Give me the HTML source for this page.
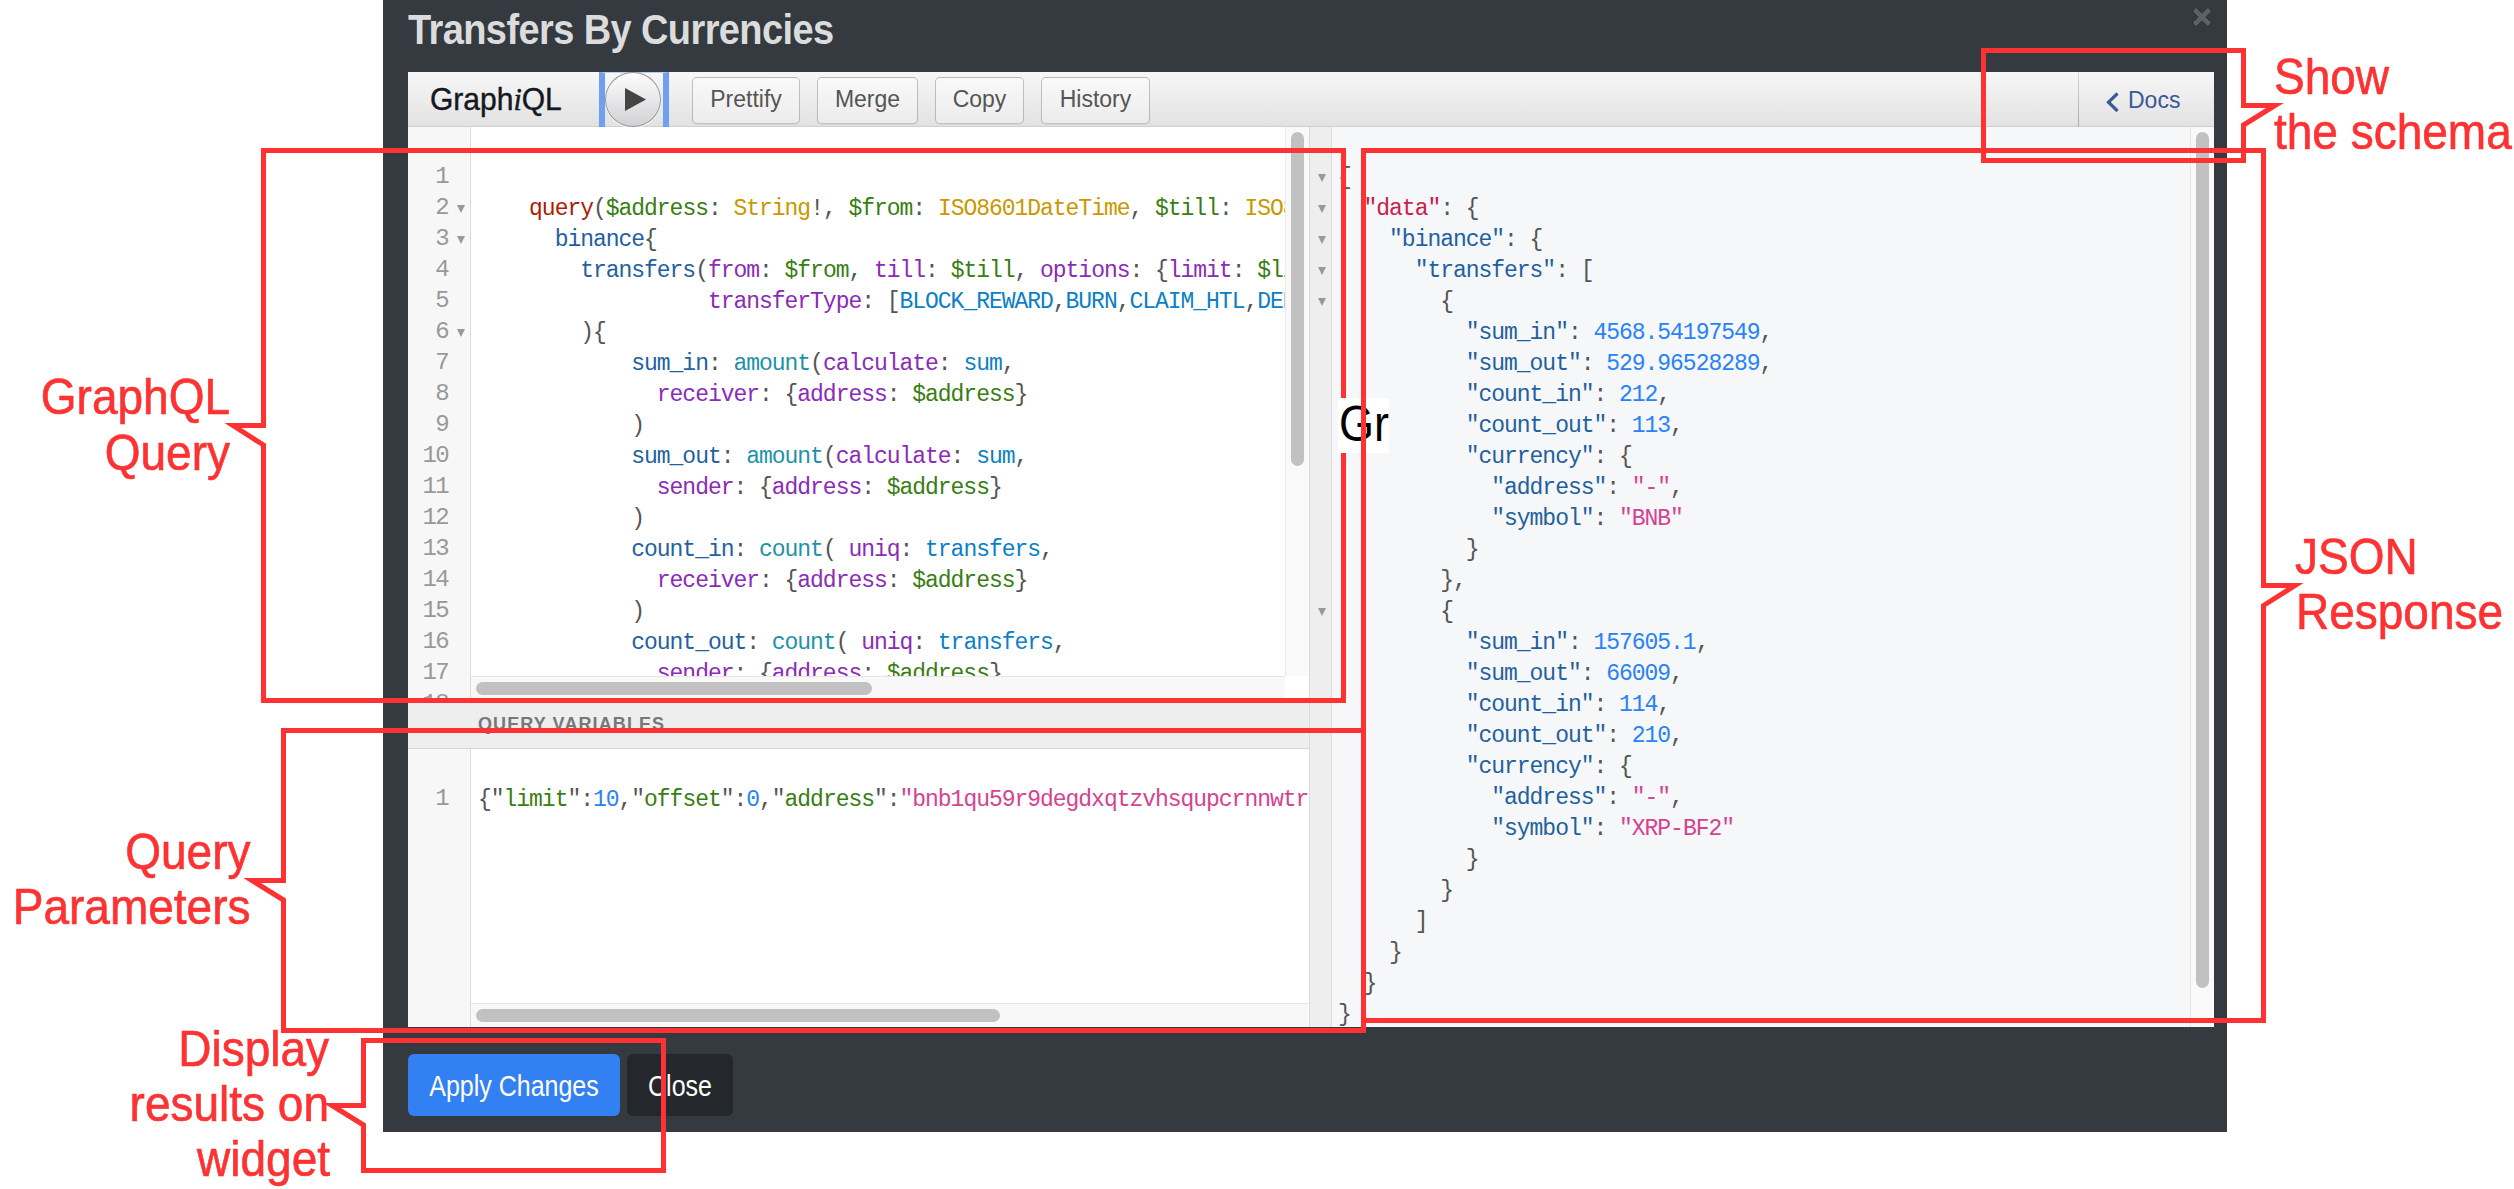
<!DOCTYPE html>
<html>
<head>
<meta charset="utf-8">
<style>
*{box-sizing:border-box;margin:0;padding:0}
html,body{width:2514px;height:1189px;overflow:hidden;background:#fff;font-family:"Liberation Sans",sans-serif}
.abs{position:absolute}
#modal{position:absolute;left:383px;top:0;width:1844px;height:1132px;background:#343a40}
#title{position:absolute;left:408px;top:6px;transform:scaleY(1.115);transform-origin:0 0;font-size:38px;font-weight:bold;color:#dcdcdc;letter-spacing:-0.6px;white-space:nowrap}
#closex{position:absolute;left:2190px;top:5px;width:24px;height:24px}
#gq{position:absolute;left:408px;top:72px;width:1806px;height:955px;background:#fff;overflow:hidden}
#toolbar{position:absolute;left:408px;top:72px;width:1806px;height:55px;background:linear-gradient(#f7f7f7,#e2e2e2);border-bottom:1px solid #d0d0d0}
.btn{position:absolute;top:77px;height:47px;border:1px solid rgba(0,0,0,.22);border-radius:5px;background:linear-gradient(#f9f9f9,#ececec);box-shadow:0 1px 1px rgba(0,0,0,.06);color:#555;font-size:23px;text-align:center;line-height:42px;white-space:nowrap}
#logo{position:absolute;left:430px;top:82px;transform:scaleY(1.03);transform-origin:0 28px;-webkit-text-stroke:0.4px #141823;font-size:30px;color:#141823;white-space:nowrap;line-height:36px}
#logo i{font-family:"Liberation Serif",serif;font-style:italic}
.mono{font-family:"Liberation Mono",monospace}
.gutter{position:absolute;background:#f7f7f7;border-right:1px solid #ddd}
.ln{position:absolute;width:62px;text-align:right;color:#999;font-family:"Liberation Mono",monospace;font-size:24px;letter-spacing:-1.63px;white-space:pre;line-height:31px}
.code{position:absolute;white-space:pre;font-family:"Liberation Mono",monospace;font-size:23px;letter-spacing:-1.03px;line-height:31px;color:#555}
.fold{position:absolute;width:0;height:0;border-left:4.4px solid transparent;border-right:4.4px solid transparent;border-top:8.8px solid #999}
.kw{color:#B11A04}.vr{color:#397D13}.at{color:#CA9800}.pr{color:#1F61A0}.atr{color:#8B2BB9}.q{color:#1C92A9}.en{color:#0B7FC7}.nm{color:#2882F9}.st{color:#D64292}.df{color:#C8204F}
.thumb{position:absolute;background:#c1c1c1;border-radius:7px}
#apply{position:absolute;left:408px;top:1054px;width:212px;height:62px;border-radius:6px;background:#3380f3;color:#fff;font-size:25px;line-height:62px;text-align:center;white-space:nowrap}
#closeb{position:absolute;left:627px;top:1054px;width:106px;height:62px;border-radius:6px;background:#24272b;color:#fff;font-size:25px;line-height:62px;text-align:center;white-space:nowrap}
</style>
</head>
<body>
<div id="modal"></div>
<div id="title">Transfers By Currencies</div>
<svg id="closex" viewBox="0 0 24 24"><g stroke="#2b2f34" stroke-width="6" stroke-linecap="butt"><path d="M4 4 L20 20 M20 4 L4 20"/></g><g stroke="#5d6167" stroke-width="4.6"><path d="M4.5 4.5 L19.5 19.5 M19.5 4.5 L4.5 19.5"/></g></svg>

<div id="gq"></div>
<div id="toolbar"></div>
<div id="logo">Graph<i>i</i>QL</div>


<!-- execute button -->
<div class="abs" style="left:599px;top:72px;width:70px;height:55px;border-left:6px solid #6f9ff2;border-right:6px solid #6f9ff2;border-top:1px solid #b9cff5"></div>
<div class="abs" style="left:605px;top:72px;width:56px;height:55px;border-radius:50%;border:1px solid #9a9a9a;background:linear-gradient(#fdfdfd,#d1d2d5);box-shadow:0 1px 0 #fff"></div>
<svg class="abs" style="left:620px;top:84px" width="30" height="30" viewBox="620 84 30 30"><path d="M625,88 L646,99.5 L625,111 Z" fill="#444"/></svg>
<div class="btn" style="left:692px;width:108px">Prettify</div>
<div class="btn" style="left:817px;width:101px">Merge</div>
<div class="btn" style="left:935px;width:89px">Copy</div>
<div class="btn" style="left:1041px;width:109px">History</div>
<!-- docs -->
<div class="abs" style="left:2078px;top:72px;width:1px;height:55px;background:linear-gradient(#d8d8d8,#a8a8a8)"></div>
<svg class="abs" style="left:2100px;top:88px" width="24" height="28" viewBox="2100 88 24 28"><path d="M2117.5,93.5 L2108.5,102.2 L2117.5,111" fill="none" stroke="#3B5998" stroke-width="3.2"/></svg>
<div class="abs" style="left:2128px;top:86px;font-size:23px;color:#3B5998;line-height:28px">Docs</div>

<!-- PANES -->
<div class="abs" style="left:408px;top:127px;width:901px;height:573px;background:#fff"></div>
<div class="gutter" style="left:408px;top:127px;width:63px;height:573px"></div>
<div class="abs" style="left:471px;top:127px;width:814px;height:549px;overflow:hidden">
<div class="code" style="left:7px;top:35.9px"></div>
<div class="code" style="left:7px;top:66.9px">    <span class="kw">query</span>(<span class="vr">$address</span>: <span class="at">String</span>!, <span class="vr">$from</span>: <span class="at">ISO8601DateTime</span>, <span class="vr">$till</span>: <span class="at">ISO8601DateTime</span>, <span class="vr">$limit</span>: <span class="at">Int</span>!)</div>
<div class="code" style="left:7px;top:97.9px">      <span class="pr">binance</span>{</div>
<div class="code" style="left:7px;top:128.9px">        <span class="pr">transfers</span>(<span class="atr">from</span>: <span class="vr">$from</span>, <span class="atr">till</span>: <span class="vr">$till</span>, <span class="atr">options</span>: {<span class="atr">limit</span>: <span class="vr">$limit</span>},</div>
<div class="code" style="left:7px;top:159.9px">                  <span class="atr">transferType</span>: [<span class="en">BLOCK_REWARD</span>,<span class="en">BURN</span>,<span class="en">CLAIM_HTL</span>,<span class="en">DEPOSIT</span>]</div>
<div class="code" style="left:7px;top:190.9px">        ){</div>
<div class="code" style="left:7px;top:221.9px">            <span class="pr">sum_in</span>: <span class="q">amount</span>(<span class="atr">calculate</span>: <span class="en">sum</span>,</div>
<div class="code" style="left:7px;top:252.9px">              <span class="atr">receiver</span>: {<span class="atr">address</span>: <span class="vr">$address</span>}</div>
<div class="code" style="left:7px;top:283.9px">            )</div>
<div class="code" style="left:7px;top:314.9px">            <span class="pr">sum_out</span>: <span class="q">amount</span>(<span class="atr">calculate</span>: <span class="en">sum</span>,</div>
<div class="code" style="left:7px;top:345.9px">              <span class="atr">sender</span>: {<span class="atr">address</span>: <span class="vr">$address</span>}</div>
<div class="code" style="left:7px;top:376.9px">            )</div>
<div class="code" style="left:7px;top:407.9px">            <span class="pr">count_in</span>: <span class="q">count</span>( <span class="atr">uniq</span>: <span class="en">transfers</span>,</div>
<div class="code" style="left:7px;top:438.9px">              <span class="atr">receiver</span>: {<span class="atr">address</span>: <span class="vr">$address</span>}</div>
<div class="code" style="left:7px;top:469.9px">            )</div>
<div class="code" style="left:7px;top:500.9px">            <span class="pr">count_out</span>: <span class="q">count</span>( <span class="atr">uniq</span>: <span class="en">transfers</span>,</div>
<div class="code" style="left:7px;top:531.9px">              <span class="atr">sender</span>: {<span class="atr">address</span>: <span class="vr">$address</span>}</div>
<div class="code" style="left:7px;top:562.9px">            )</div>
</div>
<div class="abs" style="left:408px;top:127px;width:62px;height:573px;overflow:hidden">
<div class="ln" style="left:-22px;top:34.4px">1</div>
<div class="ln" style="left:-22px;top:65.4px">2</div>
<div class="ln" style="left:-22px;top:96.4px">3</div>
<div class="ln" style="left:-22px;top:127.4px">4</div>
<div class="ln" style="left:-22px;top:158.4px">5</div>
<div class="ln" style="left:-22px;top:189.4px">6</div>
<div class="ln" style="left:-22px;top:220.4px">7</div>
<div class="ln" style="left:-22px;top:251.4px">8</div>
<div class="ln" style="left:-22px;top:282.4px">9</div>
<div class="ln" style="left:-22px;top:313.4px">10</div>
<div class="ln" style="left:-22px;top:344.4px">11</div>
<div class="ln" style="left:-22px;top:375.4px">12</div>
<div class="ln" style="left:-22px;top:406.4px">13</div>
<div class="ln" style="left:-22px;top:437.4px">14</div>
<div class="ln" style="left:-22px;top:468.4px">15</div>
<div class="ln" style="left:-22px;top:499.4px">16</div>
<div class="ln" style="left:-22px;top:530.4px">17</div>
<div class="ln" style="left:-22px;top:561.4px">18</div>
<div class="fold" style="left:49px;top:77.5px"></div>
<div class="fold" style="left:49px;top:108.5px"></div>
<div class="fold" style="left:49px;top:201.5px"></div>
</div>
<div class="abs" style="left:1285px;top:127px;width:24px;height:549px;background:#f9f9f9;border-left:1px solid #ececec"></div>
<div class="thumb" style="left:1291px;top:132px;width:13px;height:334px"></div>
<div class="abs" style="left:471px;top:676px;width:814px;height:24px;background:#f8f8f8;border-top:1px solid #e6e6e6"></div>
<div class="thumb" style="left:476px;top:682px;width:396px;height:13px"></div>
<div class="abs" style="left:1285px;top:676px;width:24px;height:24px;background:#fff"></div>
<div class="abs" style="left:408px;top:700px;width:901px;height:49px;background:#eeeeee;border-bottom:1px solid #d8d8d8;overflow:hidden"><div class="abs" style="left:70px;top:12px;font-size:18px;font-weight:bold;color:#777;letter-spacing:1.1px;line-height:24px;white-space:nowrap">QUERY VARIABLES</div></div>
<div class="abs" style="left:408px;top:749px;width:901px;height:278px;background:#fff"></div>
<div class="gutter" style="left:408px;top:749px;width:63px;height:278px"></div>
<div class="ln" style="left:386px;top:783.2px">1</div>
<div class="abs" style="left:471px;top:749px;width:838px;height:254px;overflow:hidden">
<div class="code" style="left:7px;top:35.7px">{"<span class="vr">limit</span>":<span class="nm">10</span>,"<span class="vr">offset</span>":<span class="nm">0</span>,"<span class="vr">address</span>":<span class="st">"bnb1qu59r9degdxqtzvhsqupcrnnwtrg6wd2tmf3h"</span>,"<span class="vr">from</span>":null}</div>
</div>
<div class="abs" style="left:471px;top:1003px;width:838px;height:24px;background:#f8f8f8;border-top:1px solid #e6e6e6"></div>
<div class="thumb" style="left:476px;top:1009px;width:524px;height:13px"></div>
<div class="abs" style="left:1309px;top:127px;width:23px;height:900px;background:#eeeeee;border-left:1px solid #dcdcdc;border-right:1px solid #dcdcdc"></div>
<div class="fold" style="left:1317.8px;top:173.7px"></div>
<div class="fold" style="left:1317.8px;top:204.7px"></div>
<div class="fold" style="left:1317.8px;top:235.7px"></div>
<div class="fold" style="left:1317.8px;top:266.7px"></div>
<div class="fold" style="left:1317.8px;top:297.7px"></div>
<div class="fold" style="left:1317.8px;top:607.7px"></div>
<div class="abs" style="left:1332px;top:127px;width:882px;height:900px;background:#f6f7f9"></div>
<div class="abs" style="left:1332px;top:127px;width:858px;height:900px;overflow:hidden">
<div class="code" style="left:6px;top:35.9px">{</div>
<div class="code" style="left:6px;top:66.9px">  <span class="df">"data"</span>: {</div>
<div class="code" style="left:6px;top:97.9px">    <span class="pr">"binance"</span>: {</div>
<div class="code" style="left:6px;top:128.9px">      <span class="pr">"transfers"</span>: [</div>
<div class="code" style="left:6px;top:159.9px">        {</div>
<div class="code" style="left:6px;top:190.9px">          <span class="pr">"sum_in"</span>: <span class="nm">4568.54197549</span>,</div>
<div class="code" style="left:6px;top:221.9px">          <span class="pr">"sum_out"</span>: <span class="nm">529.96528289</span>,</div>
<div class="code" style="left:6px;top:252.9px">          <span class="pr">"count_in"</span>: <span class="nm">212</span>,</div>
<div class="code" style="left:6px;top:283.9px">          <span class="pr">"count_out"</span>: <span class="nm">113</span>,</div>
<div class="code" style="left:6px;top:314.9px">          <span class="pr">"currency"</span>: {</div>
<div class="code" style="left:6px;top:345.9px">            <span class="pr">"address"</span>: <span class="st">"-"</span>,</div>
<div class="code" style="left:6px;top:376.9px">            <span class="pr">"symbol"</span>: <span class="st">"BNB"</span></div>
<div class="code" style="left:6px;top:407.9px">          }</div>
<div class="code" style="left:6px;top:438.9px">        },</div>
<div class="code" style="left:6px;top:469.9px">        {</div>
<div class="code" style="left:6px;top:500.9px">          <span class="pr">"sum_in"</span>: <span class="nm">157605.1</span>,</div>
<div class="code" style="left:6px;top:531.9px">          <span class="pr">"sum_out"</span>: <span class="nm">66009</span>,</div>
<div class="code" style="left:6px;top:562.9px">          <span class="pr">"count_in"</span>: <span class="nm">114</span>,</div>
<div class="code" style="left:6px;top:593.9px">          <span class="pr">"count_out"</span>: <span class="nm">210</span>,</div>
<div class="code" style="left:6px;top:624.9px">          <span class="pr">"currency"</span>: {</div>
<div class="code" style="left:6px;top:655.9px">            <span class="pr">"address"</span>: <span class="st">"-"</span>,</div>
<div class="code" style="left:6px;top:686.9px">            <span class="pr">"symbol"</span>: <span class="st">"XRP-BF2"</span></div>
<div class="code" style="left:6px;top:717.9px">          }</div>
<div class="code" style="left:6px;top:748.9px">        }</div>
<div class="code" style="left:6px;top:779.9px">      ]</div>
<div class="code" style="left:6px;top:810.9px">    }</div>
<div class="code" style="left:6px;top:841.9px">  }</div>
<div class="code" style="left:6px;top:872.9px">}</div>
</div>
<div class="abs" style="left:2190px;top:127px;width:24px;height:900px;background:#f9f9f9;border-left:1px solid #e6e6e6"></div>
<div class="thumb" style="left:2196px;top:132px;width:13px;height:856px"></div>
<!-- /PANES -->
<!-- FOOTER -->
<div id="apply"><span style="display:inline-block;transform:translateY(2px) scaleY(1.2);transform-origin:50% 40px;line-height:62px">Apply Changes</span></div>
<div id="closeb"><span style="display:inline-block;transform:translateY(2px) scaleY(1.2);transform-origin:50% 40px;line-height:62px">Close</span></div>
<!-- ANN -->
<svg class="abs" style="left:0;top:0" width="2514" height="1189" viewBox="0 0 2514 1189">
<g fill="none" stroke="#fe3232" stroke-width="5" stroke-miterlimit="10">
<path d="M263.5,150.5 H1343.5 V700.5 H263.5 V445 L233,425.5 H263.5 Z"/>
<path d="M283.5,730.5 H1363.5 V1030.5 H283.5 V900 L252,880.5 H283.5 Z"/>
<path d="M363.5,1040.5 H663.5 V1170.5 H363.5 V1125 L332,1105.5 H363.5 Z"/>
<path d="M1983.5,50.5 H2243.5 V105.5 H2275 L2243.5,125 V160.5 H1983.5 Z"/>
</g>
</svg>
<div class="abs" style="left:1338px;top:398px;width:51px;height:55px;background:#fff;overflow:hidden"><div class="abs" style="left:1px;top:0;font-size:45px;color:#000;line-height:55px;white-space:nowrap;transform:scaleY(1.13);transform-origin:0 42px">Gr</div></div>
<svg class="abs" style="left:0;top:0" width="2514" height="1189" viewBox="0 0 2514 1189">
<g fill="none" stroke="#fe3232" stroke-width="5" stroke-miterlimit="10">
<path d="M1363.5,150.5 H2263.5 V585.5 H2295 L2263.5,605.5 V1020.5 H1363.5 Z"/>
</g>
<g fill="#fe3232" stroke="#fe3232" stroke-width="0.6" font-family="Liberation Sans" font-size="46">
<text transform="translate(230,414) scale(1,1.1)" text-anchor="end">GraphQL</text>
<text transform="translate(230,470) scale(1,1.1)" text-anchor="end">Query</text>
<text transform="translate(250.5,868.7) scale(1,1.1)" text-anchor="end">Query</text>
<text transform="translate(250.5,923.6) scale(1,1.1)" text-anchor="end">Parameters</text>
<text transform="translate(329,1065.6) scale(1,1.1)" text-anchor="end">Display</text>
<text transform="translate(329,1120.6) scale(1,1.1)" text-anchor="end">results on</text>
<text transform="translate(330,1175.5) scale(1,1.1)" text-anchor="end">widget</text>
<text transform="translate(2274,94.3) scale(1,1.1)">Show</text>
<text transform="translate(2274,149) scale(1,1.1)">the schema</text>
<text transform="translate(2295,574) scale(1,1.1)">JSON</text>
<text transform="translate(2296,628.7) scale(1,1.1)">Response</text>
</g>
</svg>
<!-- /ANN -->
</body>
</html>
